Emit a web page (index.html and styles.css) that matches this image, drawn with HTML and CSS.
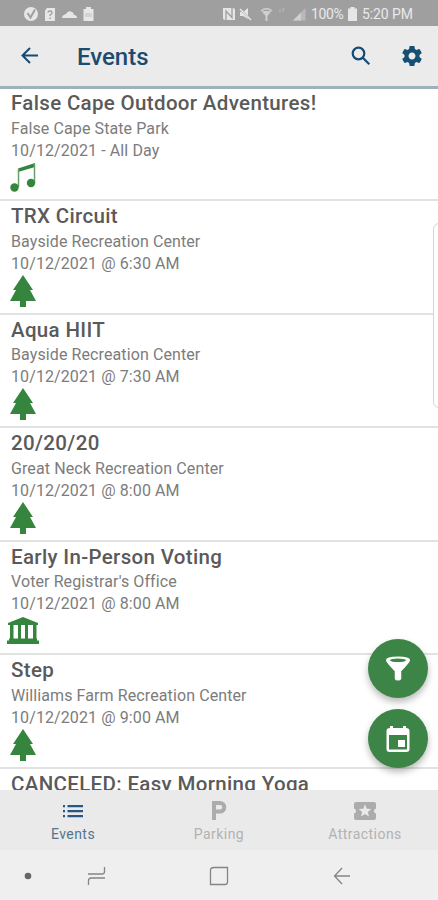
FILE: index.html
```html
<!DOCTYPE html>
<html lang="en">
<head>
<meta charset="utf-8">
<title>Events</title>
<link rel="stylesheet" href="styles.css">
</head>
<body>
<svg width="0" height="0" class="defs">
  <symbol id="tree" viewBox="0 0 26 32"><path d="M13 0 L23 15 H20 L26 26 H16 V32 H10 V26 H0 L6 15 H3 Z"/></symbol>
</svg>
<div class="screen">
  <div class="status">
    <svg class="status-left" width="72" height="16" viewBox="0 0 72 16">
      <circle cx="7" cy="8" r="7"/><path class="cut" d="M3.500 7 L6.500 11.500 L11 3.500"/>
      <path d="M23 2 H31 V15 H21 V4.500 Z"/><path class="cut thin" d="M24 6.500 Q24 5 26 5 Q28 5 28 7 Q28 8 26 9 V10 M26 11.500 V13"/>
      <path d="M38 12 Q38 9 42 8 Q44 4 48 6 Q50 7 50 9 Q53 9 53 12 Z"/>
      <path d="M62 1 H67 V3 H69.500 V15 H59.500 V3 H62 Z"/><path class="cut faint" d="M61 8 H68 M61 10 H68"/>
    </svg>
    <svg class="status-right" width="86" height="16" viewBox="0 0 86 16">
      <path d="M1 2 H11 Q13 2 13 4 V14 H3 Q1 14 1 12 Z"/><path class="cut thin" d="M4 14 V5 L10 11.500 V2"/>
      <path d="M18 6 H21 L26 2 V13 L21 10 H18 Z"/><path class="cut" d="M17 2 L29 14"/><path class="line" d="M18 3 L29 14"/>
      <path class="line soft" d="M39 5 Q44.500 0.500 50 5 M41.500 7.500 Q44.500 5 47.500 7.500"/><path class="soft-fill" d="M40 5 H49 L45.500 10 V15 H43.500 V10 Z"/>
      <path class="line dim" d="M58 3 V7 M60 3 H63 M61 3 V6"/>
      <path class="dim-fill" d="M71 14.500 L83.500 2 V14.500 Z"/><path class="soft-fill" d="M71 14.500 L79 6.500 V14.500 Z"/>
    </svg>
    <span class="pct">100%</span>
    <svg class="batt" width="9" height="14" viewBox="0 0 9 14"><path d="M2.500 0 H6.500 V1.500 H9 V14 H0 V1.500 H2.500 Z"/></svg>
    <span class="clock">5:20 PM</span>
  </div>
  <header class="bar">
    <svg class="back" width="18" height="17" viewBox="0 0 18 17"><path d="M17 8.500 H2 M9 1 L1.500 8.500 L9 16"/></svg>
    <h1>Events</h1>
    <svg class="search" width="20" height="20" viewBox="0 0 20 20"><circle cx="7.500" cy="7.500" r="5.800"/><path d="M11.800 11.800 L18.300 18.300"/></svg>
    <svg class="gear" width="24" height="24" viewBox="0 0 24 24"><path d="M19.430 12.980c.04-.32.07-.64.07-.98s-.03-.66-.07-.98l2.110-1.650c.19-.15.24-.42.12-.64l-2-3.460c-.12-.22-.39-.3-.61-.22l-2.490 1c-.52-.4-1.080-.73-1.690-.98l-.38-2.650C14.460 2.180 14.250 2 14 2h-4c-.25 0-.46.18-.49.42l-.38 2.650c-.61.25-1.170.59-1.690.98l-2.490-1c-.23-.09-.49 0-.61.22l-2 3.460c-.13.22-.07.49.12.64l2.110 1.650c-.04.32-.07.65-.07.98s.03.66.07.98l-2.110 1.650c-.19.15-.24.42-.12.64l2 3.460c.12.22.39.3.61.22l2.490-1c.52.4 1.080.73 1.690.98l.38 2.650c.03.24.24.42.49.42h4c.25 0 .46-.18.49-.42l.38-2.650c.61-.25 1.170-.59 1.690-.98l2.490 1c.23.09.49 0 .61-.22l2-3.460c.12-.22.07-.49-.12-.64l-2.110-1.650zM12 15.500c-1.930 0-3.500-1.570-3.500-3.500s1.570-3.500 3.500-3.500 3.500 1.570 3.500 3.500-1.570 3.500-3.500 3.500z"/></svg>
  </header>
  <main class="list">
    <article class="event"><h2>False Cape Outdoor Adventures!</h2><p>False Cape State Park</p><p class="date">10/12/2021 - All Day</p>
      <svg class="icon music" width="26" height="29" viewBox="0 0 26 29"><path d="M8 5.500 L25 0 V4 L8 9 Z"/><path class="stem" d="M8.500 6 V24 M24.500 1 V20"/><circle cx="4.500" cy="24.500" r="4.200"/><circle cx="21" cy="20" r="4.200"/></svg></article>
    <article class="event"><h2>TRX Circuit</h2><p>Bayside Recreation Center</p><p class="date">10/12/2021 @ 6:30 AM</p><svg class="icon" width="26" height="32"><use href="#tree"/></svg></article>
    <article class="event"><h2>Aqua HIIT</h2><p>Bayside Recreation Center</p><p class="date">10/12/2021 @ 7:30 AM</p><svg class="icon" width="26" height="32"><use href="#tree"/></svg></article>
    <article class="event"><h2>20/20/20</h2><p>Great Neck Recreation Center</p><p class="date">10/12/2021 @ 8:00 AM</p><svg class="icon" width="26" height="32"><use href="#tree"/></svg></article>
    <article class="event"><h2>Early In-Person Voting</h2><p>Voter Registrar's Office</p><p class="date">10/12/2021 @ 8:00 AM</p>
      <svg class="icon bank" width="32" height="27" viewBox="0 0 32 27"><path d="M16 0 L31 6 V8 H1 V6 Z M3 8 H6.500 V22 H3 Z M11 8 H14 V22 H11 Z M18 8 H21 V22 H18 Z M26 8 H29.500 V22 H26 Z M2 21.500 H30 V23.500 H32 V27 H0 V23.500 H2 Z"/></svg></article>
    <article class="event"><h2>Step</h2><p>Williams Farm Recreation Center</p><p class="date">10/12/2021 @ 9:00 AM</p><svg class="icon" width="26" height="32"><use href="#tree"/></svg></article>
    <article class="event"><h2>CANCELED: Easy Morning Yoga</h2></article>
  </main>
  <nav class="tabs">
    <div class="tab active"><svg width="20" height="14" viewBox="0 0 20 14"><path d="M0 1 H2 V3.200 H0 Z M0 6 H2 V8.200 H0 Z M0 11 H2 V13.200 H0 Z M4.500 1 H20 V3.200 H4.500 Z M4.500 6 H20 V8.200 H4.500 Z M4.500 11 H20 V13.200 H4.500 Z"/></svg><span>Events</span></div>
    <div class="tab"><svg width="16" height="20" viewBox="0 0 16 20"><path fill-rule="evenodd" d="M1 0 H9 A6.300 6.300 0 0 1 9 12.600 H5 V19 H1 Z M5 4 V8.600 H9 A2.300 2.300 0 0 0 9 4 Z"/></svg><span>Parking</span></div>
    <div class="tab"><svg width="22" height="18" viewBox="0 0 22 18"><path fill-rule="evenodd" d="M2 0 H20 Q22 0 22 2 V6.500 Q20 7 20 9 Q20 11 22 11.500 V16 Q22 18 20 18 H2 Q0 18 0 16 V11.500 Q2 11 2 9 Q2 7 0 6.500 V2 Q0 0 2 0 Z M11 2.300 L9.300 6.700 L4.700 7 L8.200 10 L7 14.500 L11 12 L15 14.500 L13.800 10 L17.300 7 L12.700 6.700 Z"/></svg><span>Attractions</span></div>
  </nav>
  <footer class="system">
    <svg width="8" height="8" viewBox="0 0 8 8"><circle cx="4" cy="4" r="3.300" fill="#666"/></svg>
    <svg width="20" height="20" viewBox="0 0 20 20"><path d="M1 8 H15 Q17.500 8 17.500 5.500 V1 M18 12 H4 Q1.500 12 1.500 14.500 V19"/></svg>
    <svg width="20" height="20" viewBox="0 0 20 20"><path d="M5 1.500 H18.500 V16 Q18.500 18.500 16 18.500 H1.500 V4 Q1.500 1.500 5 1.500"/></svg>
    <svg width="18" height="20" viewBox="0 0 18 20"><path d="M17 10 H1.500 M9 2 L1.500 10 L9 18"/></svg>
  </footer>
  <div class="edge"></div>
  <div class="fabs">
    <div class="fab"><svg width="26" height="27" viewBox="0 0 28 28"><path fill-rule="evenodd" d="M1 5 Q1 1 14 1 Q27 1 27 5 Q27 7 17.500 17 V25 Q17 27 14 27 Q11 27 10.500 25 V17 Q1 7 1 5 Z M5 5 Q7 7 14 7 Q21 7 23 5 Q21 3.200 14 3.200 Q7 3.200 5 5 Z"/></svg></div>
    <div class="fab"><svg width="24" height="28" viewBox="0 0 24 28"><path fill-rule="evenodd" d="M4 1 H7 V3 H17 V1 H20 V3 Q23.500 3 23.500 6 V24 Q23.500 27 20.500 27 H3.500 Q0.500 27 0.500 24 V6 Q0.500 3 4 3 Z M3 10 V24.500 H21 V10 Z"/><path d="M12 15 H19 V22 H12 Z"/></svg></div>
  </div>
</div>
</body>
</html>
```
FILE: styles.css
```css
* { box-sizing: border-box; }
body { margin: 0; font-family: Roboto, sans-serif; background: #fff; }
svg { display: block; flex: none; }
h1, h2, p { margin: 0; white-space: nowrap; }
.defs { position: absolute; }
.screen { position: relative; width: 438px; height: 900px; overflow: hidden; display: flex; flex-direction: column; }
.status { height: 26px; flex: none; background: #9f9f9f; display: flex; align-items: center; padding: 1px 0 0 24px; color: #e9e9e9; font-size: 14px; fill: #e6e6e6; }
.status-left { margin-right: 126px; }
.status .cut { fill: none; stroke: #9f9f9f; stroke-width: 2; }
.status .cut.thin { stroke-width: 1.3; }
.status .cut.faint { stroke: #c0c0c0; stroke-width: 1; }
.status .line { fill: none; stroke: #e6e6e6; stroke-width: 1.6; }
.status .line.soft { stroke: #cfcfcf; stroke-width: 1.5; }
.status .soft-fill { fill: #cfcfcf; }
.status .line.dim { stroke: #b5b5b5; stroke-width: 1; }
.status .dim-fill { fill: #b9b9b9; }
.pct { margin-left: 3px; width: 33px; letter-spacing: -.4px; }
.batt { margin: 0 5px 0 4px; }
.clock { white-space: nowrap; letter-spacing: -.1px; }
.bar { height: 63px; flex: none; background: #ebebeb; border-bottom: 3px solid #9ab2b8; display: flex; align-items: center; padding: 0 14px 0 21px; }
.back { fill: none; stroke: #174a73; stroke-width: 2; margin-top: -1px; }
h1 { margin: 1px 0 0 38px; font-size: 24px; line-height: 30px; font-weight: 500; color: #1b4c70; letter-spacing: 0; }
.search { margin-left: auto; margin-right: 29px; margin-top: -1px; fill: none; stroke: #174a73; stroke-width: 2.200; }
.gear { fill: #154f73; }
.list { flex: 1; min-height: 0; overflow: hidden; color: #5a5a5a; }
.event { height: 113.500px; border-bottom: 2px solid #e2e2e2; padding: 3px 0 0 11px; }
.event:first-child { height: 112px; padding-top: 2px; }
h2 { font-size: 20.500px; line-height: 24px; margin-bottom: 2.500px; font-weight: 500; letter-spacing: .34px; }
.event p { font-size: 16px; line-height: 22px; color: #7c7c7c; letter-spacing: .1px; }
.icon { fill: #36853f; margin: 0 0 0 -1px; }
.music { margin-top: 1px; }
.stem { fill: none; stroke: #65a36b; stroke-width: 1.500; }
.bank { margin: 2px 0 0 -4px; }
.tabs { height: 60px; flex: none; background: #eaeaea; display: grid; grid-template-columns: repeat(3, 1fr); color: #b2b2b2; fill: #acacac; }
.tab { display: grid; grid-template-rows: 42px 16px; justify-items: center; align-items: center; font-size: 14px; line-height: 16px; letter-spacing: .45px; }
.tab span { margin-top: -12px; }
.active { color: #54748e; fill: #285783; }
.system { height: 50px; flex: none; background: #efefef; display: flex; align-items: center; padding: 1px 0 0 24px; fill: none; stroke: #858585; stroke-width: 1.300; }
.system svg:nth-child(1) { stroke: none; margin-right: 55px; }
.system svg:nth-child(2) { margin-right: 102px; }
.system svg:nth-child(3) { margin-right: 104px; }
.edge { position: absolute; left: 433px; top: 223px; width: 12px; height: 185px; border: 1.500px solid #d5d5d5; border-radius: 7px; background: #fff; }
.fabs { position: absolute; left: 368px; top: 639px; display: grid; gap: 11px; }
.fab { width: 60px; height: 59px; border-radius: 50%; background: #3c8547; fill: #fff; display: grid; place-items: center; box-shadow: 0 4px 7px rgba(0,0,0,.28); }
```
